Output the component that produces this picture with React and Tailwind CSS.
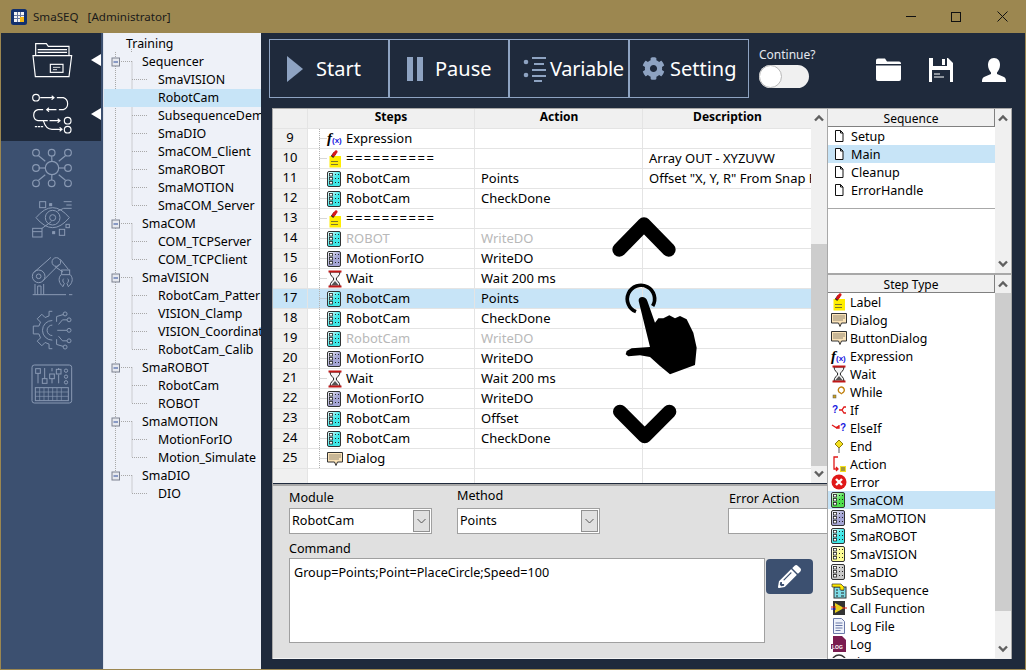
import React from 'react';
import { FaCog, FaPencilAlt } from 'react-icons/fa';

const TREE = [
  ['Training', 0], ['Sequencer', 1], ['SmaVISION', 2], ['RobotCam', 2], ['SubsequenceDemo', 2], ['SmaDIO', 2],
  ['SmaCOM_Client', 2], ['SmaROBOT', 2], ['SmaMOTION', 2], ['SmaCOM_Server', 2], ['SmaCOM', 1], ['COM_TCPServer', 2],
  ['COM_TCPClient', 2], ['SmaVISION', 1], ['RobotCam_Pattern', 2], ['VISION_Clamp', 2], ['VISION_Coordinate', 2],
  ['RobotCam_Calib', 2], ['SmaROBOT', 1], ['RobotCam', 2], ['ROBOT', 2], ['SmaMOTION', 1], ['MotionForIO', 2],
  ['Motion_Simulate', 2], ['SmaDIO', 1], ['DIO', 2],
];

const STEPS = [
  [9, 'fx', 'Expression', '', ''],
  [10, 'label', '==========', '', 'Array OUT - XYZUVW'],
  [11, 'robot', 'RobotCam', 'Points', 'Offset "X, Y, R" From Snap Point'],
  [12, 'robot', 'RobotCam', 'CheckDone', ''],
  [13, 'label', '==========', '', ''],
  [14, 'robot', 'ROBOT', 'WriteDO', '', true],
  [15, 'motion', 'MotionForIO', 'WriteDO', ''],
  [16, 'wait', 'Wait', 'Wait 200 ms', ''],
  [17, 'robot', 'RobotCam', 'Points', ''],
  [18, 'robot', 'RobotCam', 'CheckDone', ''],
  [19, 'robot', 'RobotCam', 'WriteDO', '', true],
  [20, 'motion', 'MotionForIO', 'WriteDO', ''],
  [21, 'wait', 'Wait', 'Wait 200 ms', ''],
  [22, 'motion', 'MotionForIO', 'WriteDO', ''],
  [23, 'robot', 'RobotCam', 'Offset', ''],
  [24, 'robot', 'RobotCam', 'CheckDone', ''],
  [25, 'dialog', 'Dialog', '', ''],
];

const STEP_TYPES = [
  ['label', 'Label'], ['dialog', 'Dialog'], ['dialog', 'ButtonDialog'], ['fx', 'Expression'], ['wait', 'Wait'],
  ['while', 'While'], ['if', 'If'], ['elseif', 'ElseIf'], ['end', 'End'], ['action', 'Action'], ['error', 'Error'],
  ['com', 'SmaCOM'], ['motion', 'SmaMOTION'], ['robot', 'SmaROBOT'], ['vision', 'SmaVISION'], ['dio', 'SmaDIO'],
  ['sub', 'SubSequence'], ['call', 'Call Function'], ['file', 'Log File'], ['log', 'Log'], ['time', 'Time Stat'],
];

const MODULE_FILL = { robot: '#3fe8e8', motion: '#a4a4d4', com: '#4fe04f', vision: '#fdfd96', dio: '#c8c8c8' };

function StepIcon({ type }) {
  if (MODULE_FILL[type]) {
    return (
      <svg width="16" height="16" viewBox="1 0 16 16" className="shrink-0">
        <defs>
          <linearGradient id={`mod-${type}`} x1="0" y1="0" x2="1" y2="1">
            <stop offset="0" stopColor="#ffffff" />
            <stop offset="0.55" stopColor={MODULE_FILL[type]} />
          </linearGradient>
        </defs>
        <rect x="1.500" y="0.500" width="13" height="15" rx="1.500" fill={`url(#mod-${type})`} stroke="#333" />
        <rect x="3.500" y="2.500" width="3" height="2.500" fill="#fff" stroke="#222" strokeWidth="0.8" />
        <rect x="3.500" y="6.500" width="3" height="2.500" fill="#fff" stroke="#222" strokeWidth="0.8" />
        <rect x="3.500" y="10.500" width="3" height="2.500" fill="#fff" stroke="#222" strokeWidth="0.8" />
        <path d="M9 3.500h1M12 3.500h1M9 7.500h1M12 7.500h1M9 11.500h1M12 11.500h1" stroke="#222" />
      </svg>
    );
  }
  switch (type) {
    case 'label':
      return (
        <svg width="16" height="18" viewBox="0 0 16 18" className="shrink-0">
          <rect x="2.500" y="6" width="11.500" height="11.500" fill="#ffee00" />
          <path d="M4 11l1 1 1-1 1 1 1-1 1 1 1-1 1 1M4 14l1 1 1-1 1 1 1-1 1 1 1-1 1 1" stroke="#444" strokeWidth="0.7" fill="none" />
          <path d="M5 7l3-4" stroke="#222" strokeWidth="3" />
          <path d="M6.500 5L9 1.800" stroke="#d81818" strokeWidth="3" strokeLinecap="round" />
        </svg>
      );
    case 'dialog':
      return (
        <svg width="16" height="16" viewBox="0 0 16 16" className="shrink-0">
          <path d="M.5 1.500h15v9.500h-5l-1.500 3.500-1.500-3.500h-7z" fill="#fbe3b8" stroke="#333" />
          <path d="M2.500 4h11M2.500 6h11M2.500 8h9" stroke="#333" strokeDasharray="1 1" />
        </svg>
      );
    case 'fx':
      return (
        <span className="w-[16px] shrink-0 flex items-baseline leading-none">
          <span className="font-['Liberation_Serif',serif] italic font-bold text-[15px] text-black">f</span>
          <span className="font-['Liberation_Sans',sans-serif] font-bold text-[8px] text-[#1818e0]">(x)</span>
        </span>
      );
    case 'wait':
      return (
        <svg width="16" height="18" viewBox="0 0 16 18" className="shrink-0">
          <path d="M3 2h10c0 4-3.500 5-3.800 7 .3 2 3.800 3 3.800 7H3c0-4 3.500-5 3.800-7C6.500 7 3 6 3 2z" fill="#f4f4f4" stroke="#222" />
          <path d="M1.500 1.500h13" stroke="#c01818" strokeWidth="2" />
          <path d="M1.500 16.500h13" stroke="#c01818" strokeWidth="2" />
          <path d="M4.500 15h7L8 11z" fill="#555" />
        </svg>
      );
    case 'while':
      return (
        <svg width="16" height="16" viewBox="0 0 16 16" className="shrink-0">
          <path d="M11 9a3 3 0 1 0-3-1l3 2" fill="none" stroke="#c08010" strokeWidth="1.400" />
          <rect x="2" y="11" width="3" height="3" fill="#c9a020" stroke="#555" strokeWidth="0.5" />
        </svg>
      );
    case 'if':
      return (
        <svg width="16" height="16" viewBox="0 0 16 16" className="shrink-0">
          <text x="1" y="11" fontSize="10" fontWeight="700" fill="#1818e0" fontFamily="Liberation Sans, sans-serif">?</text>
          <path d="M8 8h3l2-3h2M11 8l2 3h2" fill="none" stroke="#e01818" strokeWidth="1.300" />
        </svg>
      );
    case 'elseif':
      return (
        <svg width="16" height="16" viewBox="0 0 16 16" className="shrink-0">
          <path d="M1 5l4 2.500L8 6M8 5v3H5" fill="none" stroke="#e01818" strokeWidth="1.300" />
          <text x="9" y="11" fontSize="10" fontWeight="700" fill="#1818e0" fontFamily="Liberation Sans, sans-serif">?</text>
        </svg>
      );
    case 'end':
      return (
        <svg width="16" height="16" viewBox="0 0 16 16" className="shrink-0">
          <path d="M8 2l4 4-4 4-4-4z" fill="#f4e020" stroke="#8a7a10" />
          <path d="M8 10v5" stroke="#555" />
        </svg>
      );
    case 'action':
      return (
        <svg width="16" height="18" viewBox="0 0 16 18" className="shrink-0">
          <path d="M7 2H3v12h3M5 12l2 2-2 2" fill="none" stroke="#e01818" strokeWidth="1.300" />
          <rect x="9" y="11" width="6" height="6" fill="#f4e020" />
          <path d="M10 13h4M10 15h4" stroke="#555" />
        </svg>
      );
    case 'error':
      return (
        <svg width="16" height="16" viewBox="0 0 16 16" className="shrink-0">
          <circle cx="8" cy="8" r="7.500" fill="#e01818" />
          <path d="M5 5l6 6M11 5l-6 6" stroke="#fff" strokeWidth="2.400" />
        </svg>
      );
    case 'sub':
      return (
        <svg width="16" height="18" viewBox="0 0 16 18" className="shrink-0">
          <rect x="3" y="6" width="12" height="11" fill="#7fdde8" stroke="#333" />
          <path d="M5 9h2M5 12h2M5 15h2M10 9h3M10 12h3M10 15h3" stroke="#222" />
          <path d="M1 3h9l3 3v3H9V6H1z" fill="#ffe800" stroke="#333" strokeWidth="0.7" />
        </svg>
      );
    case 'call':
      return (
        <svg width="16" height="16" viewBox="0 0 16 16" className="shrink-0">
          <rect x="2" y="1" width="12" height="14" fill="#333" />
          <path d="M4 3l9 5-9 5z" fill="#e8d020" />
          <path d="M0 7h5" stroke="#e01818" />
          <path d="M0 9h5" stroke="#1818e0" />
          <path d="M11 8h5" stroke="#e01818" />
        </svg>
      );
    case 'file':
      return (
        <svg width="16" height="16" viewBox="0 0 16 16" className="shrink-0">
          <path d="M2.500.500h8l3 3v12h-11z" fill="#eef2fb" stroke="#6a78a8" />
          <path d="M4.500 5h7M4.500 7.500h7M4.500 10h7M4.500 12.500h5" stroke="#6a78a8" />
        </svg>
      );
    case 'log':
      return (
        <svg width="16" height="16" viewBox="0 0 16 16" className="shrink-0">
          <path d="M2 0h9l4 4v12H2z" fill="#7a1c50" />
          <rect x="0" y="8" width="13" height="5" fill="#7a1c50" />
          <text x="1" y="12.500" fontSize="5" fontWeight="700" fill="#fff" fontFamily="Liberation Sans, sans-serif">LOG</text>
        </svg>
      );
    case 'time':
      return (
        <svg width="16" height="16" viewBox="0 0 16 16" className="shrink-0">
          <circle cx="8" cy="8" r="7" fill="#fff" stroke="#333" strokeWidth="1.500" />
          <path d="M8 8L2 10a6 6 0 0 0 4 4z" fill="#2a9a3a" />
          <path d="M8 8l6 2a6 6 0 0 1-4 4z" fill="#d02020" />
        </svg>
      );
    default:
      return null;
  }
}

function FileIcon() {
  return (
    <svg width="10" height="12" viewBox="0 0 10 12" className="shrink-0">
      <path d="M1.500.500h5l2.500 2.500v8.500h-7.500zM6.500.500v2.500h2.500" fill="#fff" stroke="#111" />
    </svg>
  );
}

function TreeLines() {
  const rowY = (i) => 2 + 18 * i + 9;
  const parts = [];
  const level1 = TREE.map((t, i) => (t[1] === 1 ? i : -1)).filter((i) => i >= 0);
  parts.push(<path key="trunk" d={`M11.500 19V${rowY(level1[level1.length - 1])}`} stroke="#a8a8a8" strokeDasharray="1 1" fill="none" />);
  parts.push(<path key="tick" d="M27.500 16v4" stroke="#a8a8a8" strokeDasharray="1 1" fill="none" />);
  level1.forEach((i, n) => {
    const y = rowY(i) - 0.5;
    const end = n + 1 < level1.length ? level1[n + 1] : TREE.length;
    parts.push(<path key={`h${i}`} d={`M15 ${y}H28M28 ${y}V${rowY(end - 1) - 0.5}`} stroke="#a8a8a8" strokeDasharray="1 1" fill="none" />);
    for (let c = i + 1; c < end; c++) {
      parts.push(<path key={`c${c}`} d={`M28 ${rowY(c) - 0.5}H43`} stroke="#a8a8a8" strokeDasharray="1 1" fill="none" />);
    }
    parts.push(
      <g key={`b${i}`}>
        <rect x="8" y={y - 3.5} width="7.500" height="8" fill="#e6e8ee" stroke="#7c8290" />
        <path d={`M9.500 ${y + 0.5}H14`} stroke="#2b4a9a" />
      </g>
    );
  });
  return <svg className="absolute left-0 top-0 pointer-events-none" width="60" height="500">{parts}</svg>;
}

function Tree() {
  return (
    <div className="relative w-[158px] shrink-0 bg-[#eef1f8] pt-[2px] overflow-hidden border-l border-[#dfe3ec]">
      <TreeLines />
      {TREE.map(([name, level], i) => (
        <div
          key={i}
          className={`relative h-[18px] leading-[18px] whitespace-nowrap overflow-hidden text-[12.4px] ${i === 3 ? 'bg-[#c7e4f7]' : ''} ${
            level === 0 ? 'pl-[22px]' : level === 1 ? 'pl-[38px]' : 'pl-[54px]'
          }`}
        >
          {name}
        </div>
      ))}
    </div>
  );
}

function SideItem({ active, children }) {
  return (
    <div className={`relative h-[54px] w-[100px] flex items-center justify-center ${active ? 'bg-[#1f2a3c]' : ''}`}>
      {children}
      {active && <span className="absolute right-0 top-[21px] w-0 h-0 border-y-[6px] border-y-transparent border-r-[10px] border-r-white" />}
    </div>
  );
}

function Sidebar() {
  const dim = '#8a9ab4';
  return (
    <div className="w-[102px] shrink-0 bg-[#3c5070]">
      <SideItem active>
        <svg width="42" height="38" viewBox="92 126 126 114" fill="none" stroke="#fff" strokeWidth="3.500" className="ml-[2px]">
          <path d="M106 170V134h32l6 8h62v28" />
          <path d="M112 152h88M112 160h88" strokeWidth="4" />
          <path d="M98 170h116l-8 63H105z" fill="#1f2a3c" />
          <rect x="150" y="196" width="38" height="24" />
          <path d="M158 205h22M158 212h12" strokeWidth="2.500" />
        </svg>
      </SideItem>
      <SideItem active>
        <svg width="45" height="45" viewBox="90 276 135 135" fill="none" stroke="#fff" strokeWidth="3.500" strokeLinecap="round" className="ml-[2px]">
          <circle cx="108" cy="293" r="10" />
          <path d="M122 293h40M156 288l6 5-6 5" />
          <path d="M172 293h18a19 19 0 0 1 0 36h-12" />
          <path d="M168 329h-28M146 324l-6 5 6 5" />
          <path d="M128 329h-14a17 17 0 0 0 0 33h28M150 362h30M174 357l6 5-6 5" />
          <circle cx="203" cy="362" r="10" />
          <path d="M130 362c4 14 10 26 26 26h30M180 383l6 5-6 5" />
          <circle cx="203" cy="389" r="10" />
          <path d="M106 380h4M115 380h4M124 380h4" />
        </svg>
      </SideItem>
      <SideItem>
        <svg width="42" height="42" viewBox="90 442 126 122" fill="none" stroke={dim} strokeWidth="3.500" className="ml-[2px]">
          <circle cx="153" cy="503" r="20" />
          {[[105, 457], [152, 457], [201, 457], [105, 503], [201, 503], [105, 549], [152, 549], [201, 549]].map(([x, y]) => (
            <g key={`${x}${y}`}>
              <circle cx={x} cy={y} r="10" />
              <path d={`M${153 + (x - 153) * 0.42} ${503 + (y - 503) * 0.44}L${x - (x - 153) * 0.16} ${y - (y - 503) * 0.2}`} />
            </g>
          ))}
        </svg>
      </SideItem>
      <SideItem>
        <svg width="42" height="46" viewBox="90 604 126 138" fill="none" stroke={dim} strokeWidth="3" className="ml-[2px]">
          <path d="M105 660q50-60 100 0q-50 60-100 0z" />
          <circle cx="155" cy="660" r="22" />
          <circle cx="155" cy="660" r="9" />
          <rect x="116" y="612" width="18" height="18" />
          <rect x="146" y="618" width="6" height="6" fill={dim} />
          <path d="M188 612h24M196 622h16M188 632h24M170 640l18-8" />
          <rect x="95" y="692" width="28" height="26" />
          <path d="M95 702h28M123 692l28-20" />
          <rect x="155" y="702" width="6" height="6" fill={dim} />
          <rect x="175" y="695" width="16" height="18" />
          <rect x="195" y="680" width="10" height="10" />
        </svg>
      </SideItem>
      <SideItem>
        <svg width="42" height="40" viewBox="90 76 126 120" fill="none" stroke={dim} strokeWidth="3" className="ml-[2px]">
          <path d="M95 192h100M204 192h10" />
          <path d="M102 192v-32M128 192v-32M110 192v-26h10v26" />
          <circle cx="113" cy="137" r="19" />
          <circle cx="113" cy="137" r="7" />
          <path d="M100 124l50-44M126 150l50-50" />
          <circle cx="166" cy="94" r="13" />
          <path d="M178 86l24 30M162 108l24 16" />
          <rect x="182" y="118" width="24" height="14" />
          <path d="M180 132c-10 12-6 26 6 36l4-10c-5-4-6-10-2-14M208 132c10 12 6 26-6 36l-4-10c5-4 6-10 2-14" />
        </svg>
      </SideItem>
      <SideItem>
        <svg width="42" height="40" viewBox="90 236 126 122" fill="none" stroke={dim} strokeWidth="3" className="ml-[2px]">
          <path d="M154 240h-10v14l-12 5-10-10-14 14 10 10-5 12H96v24h17l5 12-10 10 14 14 10-10 12 5v14h10" />
          <path d="M154 268a30 30 0 0 0 0 60M154 282a16 16 0 0 0 0 32" />
          <circle cx="193" cy="248" r="6" />
          <circle cx="205" cy="266" r="6" />
          <circle cx="205" cy="298" r="6" />
          <circle cx="205" cy="330" r="6" />
          <circle cx="193" cy="349" r="6" />
          <path d="M187 250l-20 6v16M199 266h-14l-12 14M199 298h-30M199 330h-14l-12-14M187 347l-20-6v-16" />
        </svg>
      </SideItem>
      <SideItem>
        <svg width="42" height="40" viewBox="92 400 126 120" fill="none" stroke={dim} strokeWidth="3" className="ml-[2px]">
          <rect x="95" y="403" width="119" height="114" rx="7" />
          <path d="M113 428v30M133 412v32M155 412v10M155 444v14M175 412v6M175 432v26" />
          <rect x="106" y="414" width="14" height="14" />
          <rect x="126" y="444" width="14" height="14" />
          <rect x="148" y="430" width="14" height="14" />
          <rect x="168" y="416" width="14" height="14" />
          <circle cx="197" cy="420" r="5" />
          <circle cx="197" cy="438" r="5" />
          <circle cx="197" cy="455" r="5" />
          <rect x="105" y="471" width="99" height="39" />
          <path d="M105 484h99M105 497h99M118 471v39M131 471v39M144 471v39M157 471v39M170 471v39M183 471v39" strokeWidth="2" />
        </svg>
      </SideItem>
    </div>
  );
}

function ToolButton({ icon, label, labelClass }) {
  return (
    <div className="w-[120px] h-[59px] border border-[#8ea3c2] flex items-center text-white text-[20px] whitespace-nowrap">
      {icon}
      <span className={labelClass}>{label}</span>
    </div>
  );
}

function Toolbar() {
  return (
    <div className="h-[75px] pt-[6px] pl-[8px] flex items-start shrink-0">
      <div className="flex">
        <ToolButton
          label="Start"
          labelClass="ml-[13px]"
          icon={<span className="ml-[17px] w-0 h-0 border-y-[13px] border-y-transparent border-l-[16px] border-l-[#8ea3c2]" />}
        />
        <ToolButton
          label="Pause"
          labelClass="ml-[12px]"
          icon={
            <span className="ml-[17px] flex gap-[4px]">
              <span className="w-[6px] h-[24px] bg-[#8ea3c2]" />
              <span className="w-[6px] h-[24px] bg-[#8ea3c2]" />
            </span>
          }
        />
        <ToolButton
          label="Variable"
          labelClass="tracking-[-0.3px]"
          icon={
            <svg width="28" height="26" viewBox="0 0 28 26" className="ml-[12px] shrink-0" stroke="#8ea3c2" strokeWidth="2" fill="#8ea3c2">
              <circle cx="4" cy="6" r="2.300" stroke="none" />
              <circle cx="4" cy="19" r="2.300" stroke="none" />
              <path d="M10 2h14M12 8h10M10 14h14M10 20h14M12 25h8" fill="none" />
            </svg>
          }
        />
        <ToolButton
          label="Setting"
          labelClass="ml-[5px]"
          icon={<FaCog size={23} className="ml-[12px] text-[#8ea3c2] shrink-0" />}
        />
      </div>
      <div className="ml-[10px] pt-[8px] flex flex-col">
        <span className="text-[12px] leading-[16px] text-[#e4e8f0]">Continue?</span>
        <span className="mt-[2px] w-[50px] h-[23px] rounded-full bg-[#f0f0f0] flex items-center">
          <span className="w-[23px] h-[23px] rounded-full bg-white border border-[#b8b8b8]" />
        </span>
      </div>
      <div className="ml-[60px] pt-[19px] flex items-start text-white">
        <svg width="25" height="23" viewBox="0 0 25 23" fill="#fff">
          <path d="M0 2.500a2 2 0 0 1 2-2h7l2 3h12a2 2 0 0 1 2 2V6H0z" />
          <path d="M0 7.500h25V21a2 2 0 0 1-2 2H2a2 2 0 0 1-2-2z" />
        </svg>
        <svg width="24" height="24" viewBox="0 0 24 24" className="ml-[28px]">
          <path d="M0 0h19l5 5v19H0z" fill="#fff" />
          <rect x="4" y="0" width="14" height="8" fill="#1f2a3c" />
          <rect x="13" y="1" width="3" height="6" fill="#fff" />
          <rect x="3" y="12" width="18" height="12" fill="#1f2a3c" />
          <path d="M5 16h6M5 19h10" stroke="#fff" />
        </svg>
        <svg width="24" height="24" viewBox="0 0 24 24" fill="#fff" className="ml-[29px]">
          <path d="M12 0c4 0 6 3 6 7 0 3-1.500 6-3 7.500V16l7 3c1.500.7 2 2 2 5H0c0-3 .5-4.300 2-5l7-3v-1.500C7.500 13 6 10 6 7c0-4 2-7 6-7z" />
        </svg>
      </div>
    </div>
  );
}

function TreeStem() {
  return (
    <svg width="19" height="20" viewBox="0 0 19 20" className="shrink-0">
      <path d="M11.500 0v20M11.500 9.500H19" stroke="#b0b0b0" strokeDasharray="1 1" fill="none" />
    </svg>
  );
}

function StepTable() {
  return (
    <div className="relative h-[374px] bg-white overflow-hidden flex">
      <div className="w-[538px] shrink-0">
        <div className="flex h-[20px] bg-[#f0f0f0] font-bold text-[12px] leading-[16px] border-b border-[#e4e4e4] text-center">
          <div className="w-[35px] border-r border-[#e4e4e4]" />
          <div className="w-[167px] border-r border-[#e4e4e4]">Steps</div>
          <div className="w-[168px] border-r border-[#e4e4e4] pl-[1px]">Action</div>
          <div className="w-[168px] pl-[1px]">Description</div>
        </div>
        {STEPS.map(([n, icon, name, action, desc, off]) => (
          <div key={n} className={`flex h-[20px] leading-[18px] text-[13px] whitespace-nowrap ${n === 17 ? 'bg-[#c7e4f7]' : ''} ${off ? 'text-[#b8b8b8]' : ''}`}>
            <div className={`w-[35px] shrink-0 text-center leading-[17px] border-r border-b border-[#e4e4e4] text-black ${n === 17 ? 'bg-[#c7e4f7]' : 'bg-[#f0f0f0]'}`}>{n}</div>
            <div className="w-[167px] shrink-0 border-r border-b border-[#e4e4e4] flex items-center overflow-hidden">
              <TreeStem />
              <StepIcon type={icon} />
              <span className={`ml-[3px] mb-[1px] ${name.startsWith('=') ? 'tracking-[1.500px]' : ''}`}>{name}</span>
            </div>
            <div className="w-[168px] shrink-0 border-r border-b border-[#e4e4e4] pl-[6px] overflow-hidden">{action}</div>
            <div className="w-[168px] shrink-0 border-b border-[#e4e4e4] pl-[6px] overflow-hidden">{desc}</div>
          </div>
        ))}
        <div className="flex h-[14px]">
          <div className="w-[35px] bg-[#f0f0f0] border-r border-[#e4e4e4]" />
          <div className="w-[167px] border-r border-[#e4e4e4]" />
          <div className="w-[168px] border-r border-[#e4e4e4]" />
        </div>
      </div>
      <Scrollbar thumbTop={135} thumbHeight={222} />
      <svg className="absolute left-[287px] top-[92px] pointer-events-none" width="180" height="260" viewBox="0 0 540 780">
        <path d="M178 146L252 70L326 146" fill="none" stroke="#000" strokeWidth="42" strokeLinecap="round" strokeLinejoin="round" />
        <path d="M180 632L254 706L328 632" fill="none" stroke="#000" strokeWidth="42" strokeLinecap="round" strokeLinejoin="round" />
        <path d="M228 332A41 41 0 1 1 278 315" fill="none" stroke="#000" strokeWidth="11" />
        <path d="M236 300L270 438L215 442L200 450L197 460L205 466L240 463L270 468L300 495L330 520L405 492L410 440L400 395L380 355L360 345L345 352L328 343L310 352L295 352L285 365L262 300C258 284 234 284 236 300Z" fill="#000" />
      </svg>
    </div>
  );
}

function Scrollbar({ thumbTop, thumbHeight }) {
  return (
    <div className="relative flex-1 bg-[#f0f0f0]">
      <svg width="12" height="8" viewBox="0 0 12 8" className="absolute left-[2px] top-[5px]" fill="none" stroke="#606060" strokeWidth="2.400">
        <path d="M2 6.500l4-4 4 4" />
      </svg>
      {thumbHeight > 0 && <div className="absolute left-0 right-0 bg-[#cdcdcd]" style={{ top: thumbTop, height: thumbHeight }} />}
      <svg width="12" height="8" viewBox="0 0 12 8" className="absolute left-[2px] bottom-[5px]" fill="none" stroke="#606060" strokeWidth="2.400">
        <path d="M2 1.500l4 4 4-4" />
      </svg>
    </div>
  );
}

function Combo({ value }) {
  return (
    <div className="w-[143px] h-[26px] bg-white border border-[#a0a0a0] flex items-center justify-between pl-[2px] pr-[1px]">
      {value}
      <span className="w-[17px] h-[22px] bg-[#e0e0e0] border border-[#909090] flex items-center justify-center">
        <svg width="9" height="6" viewBox="0 0 9 6" fill="none" stroke="#555">
          <path d="M.5 1l4 4 4-4" />
        </svg>
      </span>
    </div>
  );
}

function DetailPanel() {
  return (
    <div className="mt-[1px] h-[175px] bg-[#e0e0e0] border-t-2 border-[#a8a8a8] border-b border-b-[#f4f4f4] pl-[16px] text-[12.6px] overflow-hidden">
      <div className="flex items-start h-[53px]">
        <div className="w-[168px] shrink-0 pt-[1px]">
          <div className="h-[21px] leading-[22px]">Module</div>
          <Combo value="RobotCam" />
        </div>
        <div className="w-[271px] shrink-0">
          <div className="h-[22px] leading-[20px]">Method</div>
          <Combo value="Points" />
        </div>
        <div className="shrink-0 pt-[3px]">
          <div className="h-[19px] leading-[19px] pl-[1px]">Error Action</div>
          <div className="w-[120px] h-[26px] bg-white border border-[#a0a0a0]" />
        </div>
      </div>
      <div className="h-[19px] leading-[19px]">Command</div>
      <div className="flex items-start">
        <div className="w-[476px] h-[85px] bg-white border border-[#a0a0a0] pl-[4px] pt-[4px] leading-[20px]">Group=Points;Point=PlaceCircle;Speed=100</div>
        <div className="mt-[1px] ml-[1px] w-[47px] h-[35px] rounded-[4px] bg-[#3c5070] flex items-center justify-center text-white">
          <FaPencilAlt size={23} />
        </div>
      </div>
    </div>
  );
}

function ListHeader({ title }) {
  return <div className="h-[18px] leading-[19px] text-center text-[12px] bg-[#f0f0f0] border-r border-b border-[#808080]">{title}</div>;
}

function SequencePanel() {
  return (
    <div className="h-[166px] flex border-b-[2px] border-[#a8a8a8]">
      <div className="w-[167px] bg-white flex flex-col">
        <ListHeader title="Sequence" />
        {['Setup', 'Main', 'Cleanup', 'ErrorHandle'].map((s) => (
          <div key={s} className={`h-[18px] leading-[18px] text-[12.6px] pl-[6px] flex items-center gap-[7px] ${s === 'Main' ? 'bg-[#c7e4f7]' : ''}`}>
            <FileIcon />
            <span className="mt-[1px]">{s}</span>
          </div>
        ))}
        <div className="mt-[9px] border-t border-[#a8a8a8]" />
      </div>
      <Scrollbar thumbTop={0} thumbHeight={0} />
    </div>
  );
}

function StepTypePanel() {
  return (
    <div className="h-[383px] flex overflow-hidden">
      <div className="w-[167px] bg-white overflow-hidden">
        <ListHeader title="Step Type" />
        {STEP_TYPES.map(([icon, name]) => (
          <div key={name} className={`h-[18px] leading-[18px] text-[12.4px] pl-[3px] flex items-center gap-[3px] whitespace-nowrap ${name === 'SmaCOM' ? 'bg-[#c7e4f7]' : ''}`}>
            <StepIcon type={icon} />
            <span className="mt-[1px]">{name}</span>
          </div>
        ))}
      </div>
      <Scrollbar thumbTop={18} thumbHeight={318} />
    </div>
  );
}

export default function App() {
  return (
    <div className="w-[1026px] h-[670px] bg-[#9c8750] flex flex-col font-['Noto_Sans',sans-serif] text-black overflow-hidden">
      <div className="h-[33px] shrink-0 flex items-center pl-[11px] text-[11.6px] text-[#1a1a1a]">
        <svg width="16" height="16" viewBox="0 0 16 16">
          <rect width="16" height="16" rx="2.500" fill="#12306e" />
          <rect x="3" y="3" width="10" height="10" fill="#f4f4f4" />
          <path d="M3 6.500h10M3 9.500h10M6.500 3v10M9.500 3v10" stroke="#6a7aa0" />
          <rect x="9" y="8" width="4" height="5" fill="#f4b818" />
        </svg>
        <span className="ml-[6px]">SmaSEQ</span>
        <span className="ml-[9px]">[Administrator]</span>
        <span className="ml-auto flex items-center">
          <span className="w-[10px] h-px bg-[#111]" />
          <span className="ml-[35px] w-[10px] h-[10px] border border-[#111]" />
          <svg width="11" height="11" viewBox="0 0 11 11" stroke="#111" className="ml-[36px] mr-[18px]">
            <path d="M.5.500l10 10M10.500.500l-10 10" />
          </svg>
        </span>
      </div>
      <div className="h-[636px] mx-px flex">
        <Sidebar />
        <Tree />
        <div className="flex-1 bg-[#1f2a3c] flex flex-col">
          <Toolbar />
          <div className="pl-[11px] flex">
            <div className="w-[555px] h-[551px] border-l border-t border-[#a8a8a8]">
              <StepTable />
              <DetailPanel />
            </div>
            <div className="w-[185px] h-[551px] border-t border-r border-l border-[#a8a8a8] bg-[#f0f0f0]">
              <SequencePanel />
              <StepTypePanel />
            </div>
          </div>
        </div>
      </div>
    </div>
  );
}
